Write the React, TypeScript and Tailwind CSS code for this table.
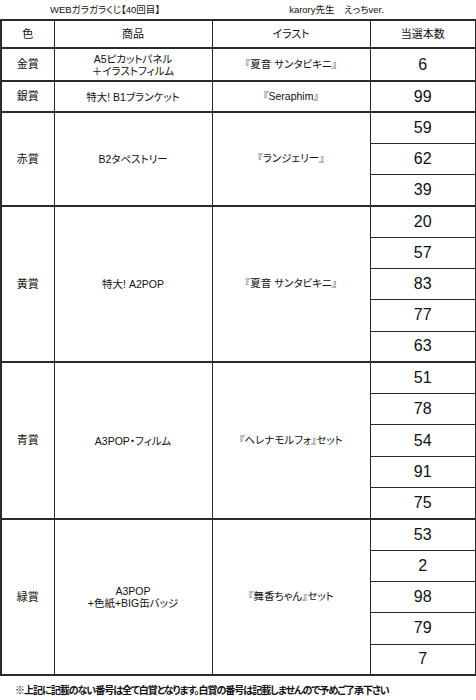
const jp = "font-['Liberation_Sans','Noto_Sans_CJK_JP',sans-serif] [font-feature-settings:'palt']";

type Group = {
  color: string;
  item: string[];
  illust: string;
  numbers: number[];
};

const groups: Group[] = [
  { color: '金賞', item: ['A5ピカットパネル', '＋イラストフィルム'], illust: '『夏音 サンタビキニ』', numbers: [6] },
  { color: '銀賞', item: ['特大! B1ブランケット'], illust: '『Seraphim』', numbers: [99] },
  { color: '赤賞', item: ['B2タペストリー'], illust: '『ランジェリー』', numbers: [59, 62, 39] },
  { color: '黄賞', item: ['特大! A2POP'], illust: '『夏音 サンタビキニ』', numbers: [20, 57, 83, 77, 63] },
  { color: '青賞', item: ['A3POP・フィルム'], illust: '『ヘレナモルフォ』セット', numbers: [51, 78, 54, 91, 75] },
  { color: '緑賞', item: ['A3POP', '+色紙+BIG缶バッジ'], illust: '『舞香ちゃん』セット', numbers: [53, 2, 98, 79, 7] },
];

function rowHeight(gi: number) {
  if (gi === 0) return 'h-[33px]';
  if (gi === 1) return 'h-[31px]';
  return 'h-[31.3px]';
}

const span = 'border-x border-b-2 border-t-2 border-[#2a2a2a]';

export default function App() {
  return (
    <div className={`w-[476px] h-[700px] bg-white text-[#111] ${jp}`}>
      <div className="h-[19px] flex items-center text-[9.5px] leading-none">
        <span className="ml-[50px]">WEBガラガラくじ【40回目】</span>
        <span className="ml-[129px]">karory先生　えっちver.</span>
      </div>
      <table className="w-[475px] border-collapse border-2 border-[#2a2a2a] table-fixed">
        <colgroup>
          <col className="w-[53px]" />
          <col className="w-[158px]" />
          <col className="w-[158px]" />
          <col className="w-[106px]" />
        </colgroup>
        <thead>
          <tr className="h-[28px] text-[11px]">
            <th className={`font-normal ${span}`}>色</th>
            <th className={`font-normal ${span}`}>商品</th>
            <th className={`font-normal ${span}`}>イラスト</th>
            <th className={`font-normal ${span}`}>当選本数</th>
          </tr>
        </thead>
        <tbody>
          {groups.map((g, gi) =>
            g.numbers.map((n, i) => (
              <tr key={`${gi}-${i}`} className={rowHeight(gi)}>
                {i === 0 && (
                  <>
                    <td rowSpan={g.numbers.length} className={`text-center text-[11px] ${span}`}>
                      {g.color}
                    </td>
                    <td rowSpan={g.numbers.length} className={`text-center text-[10.5px] leading-[12px] ${span}`}>
                      {g.item.map((l) => (
                        <div key={l}>{l}</div>
                      ))}
                    </td>
                    <td rowSpan={g.numbers.length} className={`text-center text-[10.5px] ${span}`}>
                      {g.illust}
                    </td>
                  </>
                )}
                <td
                  className={`text-center text-[16px] font-['Liberation_Sans',sans-serif] border-x border-[#2a2a2a] ${
                    i === 0 ? 'border-t-2' : 'border-t'
                  } ${i === g.numbers.length - 1 ? 'border-b-2' : ''}`}
                >
                  {n}
                </td>
              </tr>
            ))
          )}
        </tbody>
      </table>
      <div className="mt-[10px] ml-[15px] text-[10px] font-bold tracking-[-1px] leading-none">
        ※上記に記載のない番号は全て白賞となります。白賞の番号は記載しませんので予めご了承下さい
      </div>
    </div>
  );
}
